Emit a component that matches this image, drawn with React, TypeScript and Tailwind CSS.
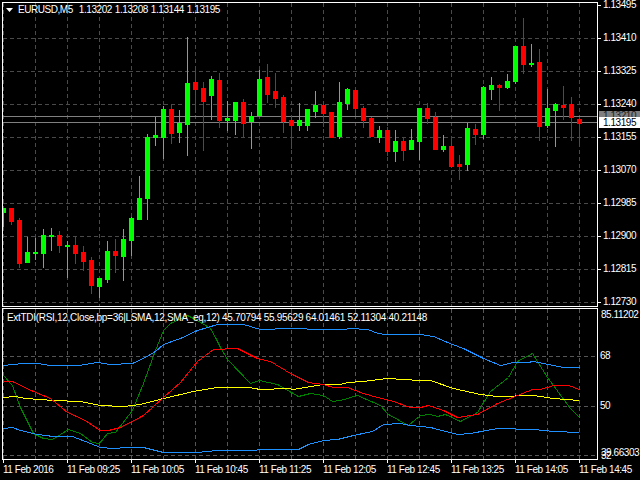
import type { FC } from 'react';

type Candle = [number, number, number, number, number];

// [up, high, body top, body bottom, low] in page pixels, one candle every 8px from x=3
const candles: Candle[] = [
  [1, 208, 208, 212, 226], [0, 208, 208, 221, 224], [0, 218, 220, 263, 267], [1, 237, 252, 262, 262],
  [1, 238, 252, 253, 259], [1, 229, 235, 253, 267], [1, 228, 235, 236, 250], [0, 231, 235, 245, 252],
  [1, 241, 245, 246, 277], [0, 236, 245, 253, 263], [0, 246, 252, 261, 270], [0, 257, 260, 285, 293],
  [1, 278, 278, 286, 297], [1, 241, 251, 279, 282], [0, 239, 251, 255, 272], [1, 229, 239, 256, 280],
  [1, 217, 218, 240, 255], [1, 176, 198, 219, 219], [1, 134, 137, 198, 219], [1, 117, 135, 137, 145],
  [1, 106, 109, 137, 158], [0, 104, 109, 133, 143], [1, 110, 123, 132, 142], [1, 37, 83, 124, 155],
  [0, 69, 82, 89, 112], [0, 82, 88, 101, 150], [1, 76, 79, 95, 119], [0, 73, 80, 120, 127],
  [1, 101, 118, 120, 130], [1, 102, 102, 120, 134], [0, 99, 102, 123, 136], [1, 112, 116, 121, 148],
  [1, 70, 79, 115, 115], [0, 64, 77, 94, 102], [0, 73, 91, 98, 107], [0, 95, 97, 121, 132],
  [0, 115, 120, 125, 148], [1, 103, 120, 125, 130], [1, 109, 109, 125, 130], [1, 91, 105, 111, 117],
  [0, 104, 105, 113, 126], [0, 112, 112, 137, 137], [1, 82, 102, 136, 138], [1, 88, 89, 103, 109],
  [0, 89, 90, 108, 114], [0, 106, 108, 120, 127], [0, 117, 118, 136, 136], [1, 126, 130, 137, 142],
  [0, 127, 130, 151, 155], [1, 130, 141, 151, 161], [0, 137, 141, 150, 160], [1, 129, 140, 149, 149],
  [1, 108, 108, 141, 159], [0, 103, 108, 118, 123], [0, 112, 117, 149, 149], [1, 135, 146, 149, 151],
  [0, 139, 146, 166, 167], [0, 155, 164, 166, 179], [1, 123, 128, 164, 170], [0, 124, 129, 134, 144],
  [1, 86, 87, 134, 138], [1, 77, 85, 89, 99], [0, 84, 85, 87, 110], [1, 74, 81, 87, 88],
  [1, 46, 46, 81, 83], [0, 18, 46, 64, 73], [1, 44, 63, 64, 66], [0, 49, 62, 126, 140],
  [1, 89, 108, 125, 127], [1, 103, 104, 110, 146], [0, 86, 105, 107, 119], [0, 97, 104, 117, 140],
  [0, 119, 119, 123, 143],
];

const tdiLines = [
  {
    color: '#008000',
    points:
      '3,375 12,385 20,407 33,433 43,438 52,439 68,429 80,433 92,442 99,443 107,433 115,432 132,410 143,383 155,350 163,330 170,323 187,315 197,320 210,328 215,337 220,347 227,359 250,383 259,380 277,384 298,396 310,393 323,395 332,401 340,400 357,395 380,405 388,414 408,425 420,415 430,414 437,416 445,414 460,421 477,412 490,391 508,377 517,361 532,353 547,377 570,408 579,417',
  },
  {
    color: '#1e90ff',
    points:
      '3,365 23,363 37,363 50,365 78,365 97,362 110,364 132,363 143,358 155,351 163,344 180,338 197,330 217,324 243,324 260,329 290,328 323,329 343,329 350,328 367,329 378,333 385,334 420,334 433,336 452,344 463,348 483,358 500,365 513,362 527,362 533,361 553,365 563,367 579,367',
  },
  {
    color: '#1e90ff',
    points:
      '3,428 12,427 20,430 37,434 53,436 72,436 90,443 100,447 113,448 127,447 143,447 163,452 197,452 217,450 253,450 260,449 298,449 308,444 323,440 337,439 353,435 372,431 383,424 400,423 410,425 430,427 457,434 470,433 497,428 533,429 553,431 579,432',
  },
  {
    color: '#ffff00',
    points:
      '3,397 15,396 25,398 53,400 80,401 100,405 123,406 140,404 163,398 193,391 217,387 248,387 260,389 287,388 293,389 323,384 340,384 347,382 363,381 387,378 420,380 430,380 453,388 480,394 497,396 533,395 553,398 579,400',
  },
  {
    color: '#ff0000',
    points:
      '3,381 12,381 33,391 50,398 67,412 83,419 100,430 108,430 120,427 143,415 163,397 180,382 197,361 213,349 237,348 257,358 270,361 290,373 308,382 323,384 333,387 347,387 363,393 377,397 390,400 410,407 420,407 428,405 443,410 457,417 477,414 497,403 517,395 532,389 540,389 553,385 568,385 579,389',
  },
];

const priceLabels = ['1.13495', '1.13410', '1.13325', '1.13240', '1.13155', '1.13070', '1.12985', '1.12900', '1.12815', '1.12730'];
const priceGrid = [38, 71, 104, 137, 170, 203, 236, 269, 302];
const timeGrid = Array.from({ length: 19 }, (_, i) => 3 + i * 32);
const timeLabels = ['11 Feb 2016', '11 Feb 09:25', '11 Feb 10:05', '11 Feb 10:45', '11 Feb 11:25', '11 Feb 12:05', '11 Feb 12:45', '11 Feb 13:25', '11 Feb 14:05', '11 Feb 14:45'];

const Grid: FC<{ rows: number[]; top: number; bottom: number; color: string }> = ({ rows, top, bottom, color }) => (
  <g stroke={color} strokeWidth="1" strokeDasharray="4 3" shapeRendering="crispEdges">
    {timeGrid.map((x) => (
      <line key={x} x1={x + 0.5} y1={top} x2={x + 0.5} y2={bottom} />
    ))}
    {rows.map((y) => (
      <line key={y} x1="3" y1={y + 0.5} x2="597" y2={y + 0.5} />
    ))}
  </g>
);

const PriceChart: FC = () => (
  <svg className="block" width="594" height="303" viewBox="3 3 594 303">
    <Grid rows={priceGrid} top={3} bottom={306} color="#4a4a4a" />
    <g stroke="#808080" shapeRendering="crispEdges">
      <line x1="3" y1="116.5" x2="597" y2="116.5" />
      <line x1="3" y1="122.5" x2="597" y2="122.5" />
    </g>
    <g shapeRendering="crispEdges">
      {candles.map(([up, high, top, bottom, low], i) => {
        const x = 3 + i * 8;
        const fill = up ? '#00ff00' : '#ff0000';
        return (
          <g key={i} fill={fill}>
            <rect x={x} y={high} width="1" height={low - high + 1} />
            <rect x={x - 2} y={top} width="5" height={bottom - top + 1} />
          </g>
        );
      })}
    </g>
  </svg>
);

const TdiChart: FC = () => (
  <svg className="block" width="594" height="150" viewBox="3 309 594 150">
    <Grid rows={[356, 406, 455]} top={309} bottom={459} color="#565656" />
    <g fill="none" strokeWidth="1" transform="translate(0.5 0.5)" shapeRendering="crispEdges">
      {tdiLines.map((line) => (
        <polyline key={line.points.slice(0, 12)} points={line.points} stroke={line.color} />
      ))}
    </g>
  </svg>
);

export default function App() {
  return (
    <div className="relative w-[640px] h-[480px] overflow-hidden bg-black text-white text-[10px] leading-[10px] tracking-[-0.45px] whitespace-nowrap font-['Liberation_Sans',sans-serif]">
      {/* Price pane */}
      <div className="flex h-[308px]">
        <div className="relative ml-[2px] mt-[2px] w-[596px] h-[305px] border border-white">
          <PriceChart />
          <div className="absolute left-[3px] top-[2px] flex items-center h-[10px]">
            <svg className="mr-[5px]" width="7" height="4" viewBox="0 0 7 4">
              <path d="M0 0h7L3.5 4z" fill="#fff" />
            </svg>
            <span className="mr-[6px]">EURUSD,M5</span>
            <span className="flex gap-[3px]">
              <span>1.13202</span>
              <span>1.13208</span>
              <span>1.13144</span>
              <span>1.13195</span>
            </span>
          </div>
        </div>
        <div className="relative flex-1 flex flex-col gap-[23px]">
          {priceLabels.map((label) => (
            <div key={label} className="flex items-center h-[10px]">
              <span className="w-[3px] h-px bg-white mr-[2px]" />
              <span>{label}</span>
            </div>
          ))}
          <div className="absolute left-px top-[111px] right-0 h-[7px] overflow-hidden bg-[#808080] pl-[4px] text-[#222222]">1.13210</div>
          <div className="absolute left-px top-[117px] right-0 h-[11px] bg-white pl-[4px] pt-px text-black">1.13195</div>
        </div>
      </div>

      {/* TDI pane */}
      <div className="flex h-[152px]">
        <div className="relative ml-[2px] w-[596px] h-[152px] border border-white">
          <TdiChart />
          <div className="absolute left-[4px] top-[4px] h-[10px] tracking-[-0.3px]">
            ExtTDI(RSI,12,Close,bp=36|LSMA,12,SMA_eq,12) 45.70794 55.95629 64.01461 52.11304 40.21148
          </div>
        </div>
        <div className="flex-1 flex flex-col pt-[2px] pl-[3px]">
          <span>85.11202</span>
          <span className="mt-[31px] -ml-px">68</span>
          <span className="mt-[40px] -ml-px">50</span>
          <span className="mt-[37px]">39.66303</span>
          <span className="-mt-[7px]">32</span>
        </div>
      </div>

      {/* Time axis */}
      <div className="flex ml-[3px]">
        {timeLabels.map((label) => (
          <div key={label} className="w-[64px] shrink-0 flex flex-col">
            <span className="w-px h-[3px] bg-white" />
            <span className="mt-[2px]">{label}</span>
          </div>
        ))}
      </div>
    </div>
  );
}
